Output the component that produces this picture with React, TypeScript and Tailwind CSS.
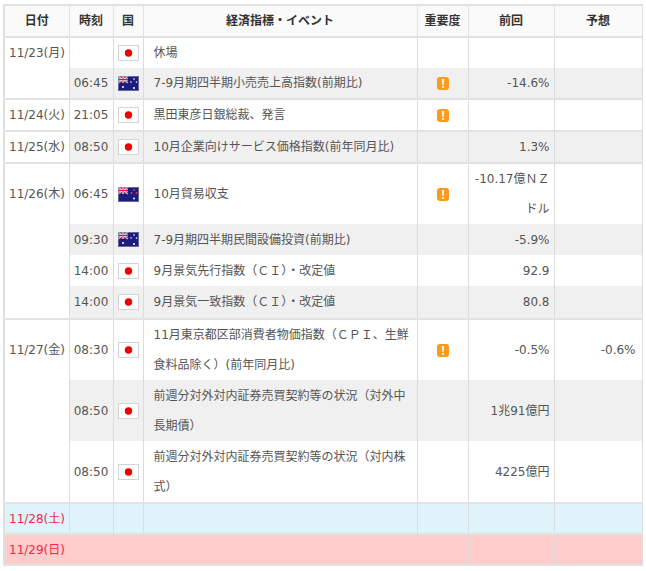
const font = "[font-family:'DejaVu_Sans','Noto_Sans_CJK_JP',sans-serif]";

type Row = {
  date?: string;
  time?: string;
  flag?: "jp" | "nz" | "au";
  name?: string;
  alert?: boolean;
  prev?: string;
  fc?: string;
  h: number;
  gray?: boolean;
  last?: boolean;
  bg?: string;
};

const rows: Row[] = [
  { date: "11/23(月)", flag: "jp", name: "休場", h: 31 },
  { time: "06:45", flag: "au", name: "7-9月期四半期小売売上高指数(前期比)", alert: true, prev: "-14.6%", h: 31, gray: true, last: true },
  { date: "11/24(火)", time: "21:05", flag: "jp", name: "黒田東彦日銀総裁、発言", alert: true, h: 32, last: true },
  { date: "11/25(水)", time: "08:50", flag: "jp", name: "10月企業向けサービス価格指数(前年同月比)", prev: "1.3%", h: 32, gray: true, last: true },
  { date: "11/26(木)", time: "06:45", flag: "nz", name: "10月貿易収支", alert: true, prev: "-10.17億ＮＺドル", h: 61 },
  { time: "09:30", flag: "au", name: "7-9月期四半期民間設備投資(前期比)", prev: "-5.9%", h: 31, gray: true },
  { time: "14:00", flag: "jp", name: "9月景気先行指数（ＣＩ）・改定値", prev: "92.9", h: 31 },
  { time: "14:00", flag: "jp", name: "9月景気一致指数（ＣＩ）・改定値", prev: "80.8", h: 33, gray: true, last: true },
  { date: "11/27(金)", time: "08:30", flag: "jp", name: "11月東京都区部消費者物価指数（ＣＰＩ、生鮮食料品除く）(前年同月比)", alert: true, prev: "-0.5%", fc: "-0.6%", h: 60 },
  { time: "08:50", flag: "jp", name: "前週分対外対内証券売買契約等の状況（対外中長期債）", prev: "1兆91億円", h: 61, gray: true },
  { time: "08:50", flag: "jp", name: "前週分対外対内証券売買契約等の状況（対内株式）", prev: "4225億円", h: 62, last: true },
  { date: "11/28(土)", h: 31, bg: "bg-[#dff3fa]", last: true },
  { date: "11/29(日)", h: 31, bg: "bg-[#ffcccc]", last: true },
];

function Flag({ kind }: { kind: "jp" | "nz" | "au" }) {
  if (kind === "jp") {
    return (
      <svg width="21" height="16" viewBox="0 0 21 16" className="mx-auto block">
        <rect x="0.5" y="0.5" width="20" height="15" fill="#fff" stroke="#d4d4d4" />
        <circle cx="10.5" cy="8" r="3.7" fill="#f00000" />
      </svg>
    );
  }
  return (
    <svg width="21" height="15" viewBox="0 0 21 15" className="mx-auto block">
      <rect width="21" height="15" fill="#1c1c7c" />
      <rect x="0" y="0" width="10" height="7" fill="#3d3d8e" />
      <path d="M0 0L10 7M10 0L0 7" stroke="#e8b4c0" strokeWidth="1.2" />
      <path d="M5 0V7M0 3.5H10" stroke="#fff" strokeWidth="2" />
      <path d="M5 0V7M0 3.5H10" stroke="#e01030" strokeWidth="1" />
      {kind === "au" ? (
        <>
          <circle cx="5" cy="11" r="1" fill="#fff" />
          <circle cx="16" cy="3" r="0.8" fill="#fff" />
          <circle cx="13" cy="6" r="0.8" fill="#fff" />
          <circle cx="18.5" cy="6" r="0.8" fill="#fff" />
          <circle cx="16" cy="12" r="1" fill="#fff" />
        </>
      ) : (
        <>
          <circle cx="16" cy="3" r="0.9" fill="#e04050" />
          <circle cx="13.5" cy="6" r="0.9" fill="#e04050" />
          <circle cx="18.5" cy="6" r="0.9" fill="#e04050" />
          <circle cx="16" cy="11.5" r="1.1" fill="#d8d8e8" />
        </>
      )}
      <rect x="0.5" y="0.5" width="20" height="14" fill="none" stroke="#9a9ab8" strokeOpacity="0.6" />
    </svg>
  );
}

function Alert() {
  return (
    <span className="mx-auto flex h-[13px] w-[12px] items-center justify-center rounded-[3px] bg-[#fb9a1c]">
      <svg width="4" height="9" viewBox="0 0 4 9">
        <path d="M0.8 0H3.2L2.6 6H1.4Z" fill="#fff" />
        <rect x="1.2" y="7" width="1.6" height="2" fill="#fff" />
      </svg>
    </span>
  );
}

export default function App() {
  const th = "border-2 border-[#e2e2e2] border-x-[1px] bg-[#fafafa] text-center font-bold text-[#333] text-[12px]";
  return (
    <div className={`${font} h-[571px] w-[646px] overflow-hidden bg-white pl-[3px] pt-[4px] text-[12px] text-[#555]`}>
      <table className="w-[638px] table-fixed border-collapse border-l-2 border-[#e0e0e0]">
        <colgroup>
          <col className="w-[65px]" />
          <col className="w-[44px]" />
          <col className="w-[30px]" />
          <col className="w-[274px]" />
          <col className="w-[51px]" />
          <col className="w-[86px]" />
          <col className="w-[88px]" />
        </colgroup>
        <thead>
          <tr className="h-[32px]">
            <th className={th}>日付</th>
            <th className={th}>時刻</th>
            <th className={th}>国</th>
            <th className={th}>経済指標・イベント</th>
            <th className={th}>重要度</th>
            <th className={th}>前回</th>
            <th className={th}>予想</th>
          </tr>
        </thead>
        <tbody>
          {rows.map((r, i) => {
            const rowBg = r.bg ?? (r.gray ? "bg-[#f0f0f0]" : "bg-white");
            const cell = `border-x border-[#dcdcdc] p-0 ${rowBg} ${r.last ? "border-b-2 border-b-[#e2e2e2]" : ""}`;
            return (
              <tr key={i} style={{ height: r.h }}>
                <td className={`border-x border-[#dcdcdc] p-0 pl-[4px] whitespace-nowrap ${r.bg ? `${r.bg} text-[#f0284a]` : "bg-white pb-[1px]"} ${r.last ? "border-b-2 border-b-[#e2e2e2]" : ""}`}>
                  {r.date}
                </td>
                <td className={`${cell} text-center`}>{r.time}</td>
                <td className={cell}>{r.flag && <Flag kind={r.flag} />}</td>
                <td className={`${cell} pl-[10px] pr-[2px] leading-[30px]`}>{r.name}</td>
                <td className={cell}>{r.alert && <Alert />}</td>
                <td className={`${cell} pl-[1px] pr-[4px] text-right leading-[30px]`}>{r.prev}</td>
                <td className={`${cell} pr-[6px] text-right`}>{r.fc}</td>
              </tr>
            );
          })}
        </tbody>
      </table>
    </div>
  );
}
